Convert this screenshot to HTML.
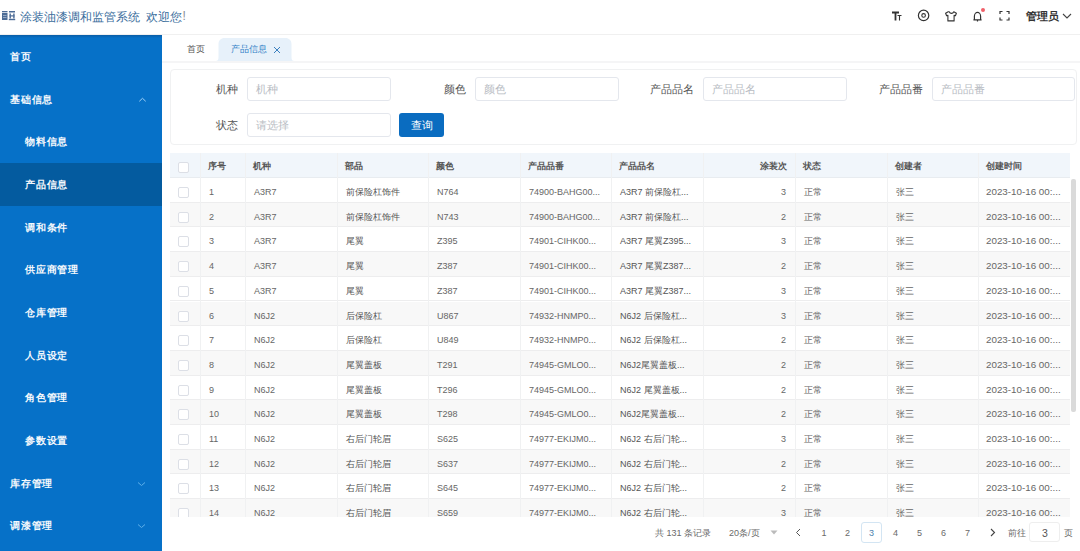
<!DOCTYPE html>
<html><head><meta charset="utf-8">
<style>
*{box-sizing:border-box;margin:0;padding:0}
html,body{width:1080px;height:551px;overflow:hidden;background:#fff;font-family:"Liberation Sans",sans-serif;}
.abs{position:absolute}
#hdr{position:absolute;left:0;top:0;width:1080px;height:35px;background:#fff;border-bottom:1px solid #f0f0f0}
.title{position:absolute;left:20px;top:9px;font-size:12px;color:#3a6d9c;white-space:nowrap;font-weight:500}
#side{position:absolute;left:0;top:35px;width:162px;height:516px;background:#0671c8;}
.mi{position:absolute;left:0;width:162px;height:43px;color:#f4f8fc;font-size:10px;line-height:44px;font-weight:700;letter-spacing:0.8px}
.mi.top{padding-left:10px}
.mi.sub{padding-left:25px}
.mi.act{background:#045b9f}
.chev{position:absolute;right:14px;top:0}
.card{position:absolute;left:170px;top:69px;width:907px;height:76px;border:1px solid #f0f1f2;border-radius:4px;background:#fff}
.lbl{position:absolute;font-size:11px;color:#555;font-weight:300;text-align:right;line-height:24px;white-space:nowrap}
.inp{position:absolute;height:24px;border:1px solid #e4e7ed;border-radius:3px;font-size:11px;color:#b8bcc3;line-height:22px;padding-left:8px;background:#fff}
.btn{position:absolute;left:399px;top:113px;width:45px;height:24px;background:#0a6cc0;border-radius:3px;color:#fff;font-size:11px;line-height:24px;text-align:center}
.thd{position:absolute;left:170px;width:900px;background:#f1f6fb;border-bottom:1px solid #e8ecf0}
.tr{position:absolute;left:170px;width:900px;height:24.7px;background:#fff;border-bottom:1px solid #ededee}
.tr.even{background:#f8f8f8}
.vl{position:absolute;top:153px;height:364px;width:1px;background:#f0f1f2}
.th{position:absolute;height:25px;line-height:26px;padding-left:8px;font-size:9px;font-weight:700;color:#555;white-space:nowrap}
.td{position:absolute;height:24.7px;line-height:29.5px;padding-left:9px;font-size:9px;color:#666;white-space:nowrap}
.bd{font-weight:500;color:#555}
.tm{font-size:9.8px;line-height:28.5px;padding-left:8px}
.r{text-align:right;padding-left:0;padding-right:8px}
.td.r{padding-right:9px}
.cb{position:absolute;width:11px;height:11px;border:1px solid #dcdfe6;border-radius:2px;background:#fff}
#tabs .t{position:absolute;font-size:9px;line-height:23px;white-space:nowrap}
.pg{position:absolute;top:523px;height:20px;line-height:20px;font-size:9px;color:#6a6a6a;white-space:nowrap}
</style></head><body>
<div id="hdr">
  
  <svg class="abs" style="left:1px;top:10px" width="15" height="11" viewBox="0 0 15 11"><g fill="#4c6c96"><rect x="1" y="1" width="5.5" height="1.3"/><rect x="1" y="3" width="5.5" height="7"/><rect x="8" y="1" width="6" height="1.5"/><rect x="8.5" y="3.5" width="1.4" height="5"/><rect x="12.2" y="3.5" width="1.4" height="5"/><rect x="8.5" y="5.3" width="5" height="1.2"/><rect x="7.8" y="8.8" width="6.4" height="1.4"/></g><rect x="2" y="5" width="3.5" height="0.8" fill="#a9bad0"/><rect x="2" y="7.2" width="3.5" height="0.8" fill="#a9bad0"/></svg>
  <div class="title" style="left:20px">涂装油漆调和监管系统</div><div class="title" style="left:145.5px">欢迎您</div><div class="abs" style="left:182.5px;top:9px;font-size:12px;color:#8a8f95">!</div>
  <div class="abs" style="left:1026px;top:10px;font-size:10.5px;color:#333;font-weight:700">管理员</div>
  <svg class="abs" style="left:885px;top:5px" width="130" height="22" viewBox="0 0 130 22" fill="none" stroke="#333" stroke-width="1.3">
    <!-- TT -->
    <path d="M7 7.5h7M10.5 7.5v8" stroke-width="1.8"/>
    <path d="M12.5 10.5h4M14.5 10.5v5" stroke-width="1.1"/>
    <!-- circle -->
    <circle cx="38.6" cy="10.4" r="5.2" stroke-width="1.2"/>
    <circle cx="38.6" cy="10.4" r="1.8" stroke-width="1.1"/>
    <!-- shirt -->
    <path d="M63.2 6.8l-2.6 1.4 1 2.6 1.3-.5v5.6h6.2v-5.6l1.3.5 1-2.6-2.6-1.4c-.5 1.1-1.3 1.6-2.3 1.6s-1.8-.5-2.3-1.6z" stroke-width="1.1" stroke-linejoin="round"/>
    <!-- bell -->
    <path d="M89.4 14.8v-3.6c0-2.1 1.4-3.8 3.1-3.8s3.1 1.7 3.1 3.8v3.6M88.4 14.8h8.2M92.5 15.2v1.3" stroke-width="1.2"/>
    <!-- fullscreen -->
    <path d="M115 9v-2.5h2.5M121.5 6.5h2.5v2.5M124 12.5v2.5h-2.5M117.5 15h-2.5v-2.5" stroke-width="1.2"/>
  </svg>
  <div class="abs" style="left:980.5px;top:7.5px;width:4.5px;height:4.5px;border-radius:50%;background:#f0606a"></div>
  <svg class="abs" style="left:1062px;top:13px" width="10" height="6" viewBox="0 0 10 6"><path d="M1 1l4 4 4-4" fill="none" stroke="#444" stroke-width="1.1"/></svg>

</div>
<div id="side">
  <div class="abs" style="left:0;top:0;width:162px;height:3px;background:linear-gradient(#0a5da6,rgba(6,113,200,0))"></div>
  <div class="mi top" style="top:0">首页</div>
  <div class="mi top" style="top:43px">基础信息<svg class="abs" style="left:138px;top:19px" width="9" height="6" viewBox="0 0 9 6"><path d="M1.3 4.3l3.2-3 3.2 3" fill="none" stroke="#9fd0f7" stroke-width="1"/></svg></div>
  <div class="mi sub" style="top:85px">物料信息</div>
  <div class="mi sub act" style="top:128px">产品信息</div>
  <div class="mi sub" style="top:171px">调和条件</div>
  <div class="mi sub" style="top:213px">供应商管理</div>
  <div class="mi sub" style="top:256px">仓库管理</div>
  <div class="mi sub" style="top:299px">人员设定</div>
  <div class="mi sub" style="top:341px">角色管理</div>
  <div class="mi sub" style="top:384px">参数设置</div>
  <div class="mi top" style="top:427px">库存管理<svg class="abs" style="left:137px;top:19px" width="9" height="6" viewBox="0 0 9 6"><path d="M1 1.5l3.5 3 3.5-3" fill="none" stroke="#5fb0ea" stroke-width="1"/></svg></div>
  <div class="mi top" style="top:469px">调漆管理<svg class="abs" style="left:137px;top:19px" width="9" height="6" viewBox="0 0 9 6"><path d="M1 1.5l3.5 3 3.5-3" fill="none" stroke="#5fb0ea" stroke-width="1"/></svg></div>
</div>
<div id="tabs">
  <div class="t" style="left:186.5px;top:38px;color:#555">首页</div>
  <div class="abs" style="left:162px;top:61px;width:918px;height:2px;background:#f5f5f6"></div>
  <svg class="abs" style="left:214px;top:37px" width="82" height="25" viewBox="0 0 82 25"><path d="M1.5 24c2.5 0 3-1.5 3-4V7c0-3.5 2.5-6 6-6h61c3.5 0 6 2.5 6 6v13c0 2.5.5 4 3 4z" fill="#e7f1fa"/></svg>
  <div class="t" style="left:230.5px;top:38px;color:#2f7fc6">产品信息</div>
  <svg class="abs" style="left:272.5px;top:46px" width="8" height="8" viewBox="0 0 8 8"><path d="M1 1l6 6M7 1l-6 6" stroke="#3a80c0" stroke-width="1"/></svg>
</div>
<div class="card"></div>
<div class="lbl" style="left:200px;top:77px;width:38px">机种</div>
<div class="inp" style="left:247px;top:77px;width:144px">机种</div>
<div class="lbl" style="left:420px;top:77px;width:46px">颜色</div>
<div class="inp" style="left:475px;top:77px;width:144px">颜色</div>
<div class="lbl" style="left:640px;top:77px;width:54px">产品品名</div>
<div class="inp" style="left:703px;top:77px;width:144px">产品品名</div>
<div class="lbl" style="left:860px;top:77px;width:63px">产品品番</div>
<div class="inp" style="left:932px;top:77px;width:143px">产品品番</div>
<div class="lbl" style="left:200px;top:113px;width:38px">状态</div>
<div class="inp" style="left:247px;top:113px;width:144px">请选择</div>
<div class="btn">查询</div>
<div id="tbl" style="position:absolute;left:0;top:0;width:1080px;height:517px;overflow:hidden">
<div class="thd" style="top:153px;height:25px"></div>
<div class="tr" style="top:178.0px"></div>
<div class="tr even" style="top:202.7px"></div>
<div class="tr" style="top:227.4px"></div>
<div class="tr even" style="top:252.1px"></div>
<div class="tr" style="top:276.8px"></div>
<div class="tr even" style="top:301.5px"></div>
<div class="tr" style="top:326.2px"></div>
<div class="tr even" style="top:350.9px"></div>
<div class="tr" style="top:375.6px"></div>
<div class="tr even" style="top:400.3px"></div>
<div class="tr" style="top:425.0px"></div>
<div class="tr even" style="top:449.7px"></div>
<div class="tr" style="top:474.4px"></div>
<div class="tr even" style="top:499.1px"></div>
<div class="vl" style="left:200px"></div>
<div class="vl" style="left:245px"></div>
<div class="vl" style="left:337px"></div>
<div class="vl" style="left:428px"></div>
<div class="vl" style="left:520px"></div>
<div class="vl" style="left:611px"></div>
<div class="vl" style="left:703px"></div>
<div class="vl" style="left:795px"></div>
<div class="vl" style="left:887px"></div>
<div class="vl" style="left:978px"></div>
<div class="cb" style="left:178px;top:162px"></div>
<div class="th" style="left:200px;width:45px;top:153px">序号</div>
<div class="th" style="left:245px;width:92px;top:153px">机种</div>
<div class="th" style="left:337px;width:91px;top:153px">部品</div>
<div class="th" style="left:428px;width:92px;top:153px">颜色</div>
<div class="th" style="left:520px;width:91px;top:153px">产品品番</div>
<div class="th" style="left:611px;width:92px;top:153px">产品品名</div>
<div class="th r" style="left:703px;width:92px;top:153px">涂装次</div>
<div class="th" style="left:795px;width:92px;top:153px">状态</div>
<div class="th" style="left:887px;width:91px;top:153px">创建者</div>
<div class="th" style="left:978px;width:92px;top:153px">创建时间</div>
<div class="cb" style="left:178px;top:187.0px"></div>
<div class="td" style="left:200px;width:45px;top:178.0px">1</div>
<div class="td" style="left:245px;width:92px;top:178.0px">A3R7</div>
<div class="td bd" style="left:337px;width:91px;top:178.0px">前保险杠饰件</div>
<div class="td" style="left:428px;width:92px;top:178.0px">N764</div>
<div class="td" style="left:520px;width:91px;top:178.0px">74900-BAHG00...</div>
<div class="td bd" style="left:611px;width:92px;top:178.0px">A3R7 前保险杠...</div>
<div class="td r" style="left:703px;width:92px;top:178.0px">3</div>
<div class="td" style="left:795px;width:92px;top:178.0px">正常</div>
<div class="td" style="left:887px;width:91px;top:178.0px">张三</div>
<div class="td tm" style="left:978px;width:92px;top:178.0px">2023-10-16 00:...</div>
<div class="cb" style="left:178px;top:211.7px"></div>
<div class="td" style="left:200px;width:45px;top:202.7px">2</div>
<div class="td" style="left:245px;width:92px;top:202.7px">A3R7</div>
<div class="td bd" style="left:337px;width:91px;top:202.7px">前保险杠饰件</div>
<div class="td" style="left:428px;width:92px;top:202.7px">N743</div>
<div class="td" style="left:520px;width:91px;top:202.7px">74900-BAHG00...</div>
<div class="td bd" style="left:611px;width:92px;top:202.7px">A3R7 前保险杠...</div>
<div class="td r" style="left:703px;width:92px;top:202.7px">2</div>
<div class="td" style="left:795px;width:92px;top:202.7px">正常</div>
<div class="td" style="left:887px;width:91px;top:202.7px">张三</div>
<div class="td tm" style="left:978px;width:92px;top:202.7px">2023-10-16 00:...</div>
<div class="cb" style="left:178px;top:236.4px"></div>
<div class="td" style="left:200px;width:45px;top:227.4px">3</div>
<div class="td" style="left:245px;width:92px;top:227.4px">A3R7</div>
<div class="td bd" style="left:337px;width:91px;top:227.4px">尾翼</div>
<div class="td" style="left:428px;width:92px;top:227.4px">Z395</div>
<div class="td" style="left:520px;width:91px;top:227.4px">74901-CIHK00...</div>
<div class="td bd" style="left:611px;width:92px;top:227.4px">A3R7 尾翼Z395...</div>
<div class="td r" style="left:703px;width:92px;top:227.4px">3</div>
<div class="td" style="left:795px;width:92px;top:227.4px">正常</div>
<div class="td" style="left:887px;width:91px;top:227.4px">张三</div>
<div class="td tm" style="left:978px;width:92px;top:227.4px">2023-10-16 00:...</div>
<div class="cb" style="left:178px;top:261.1px"></div>
<div class="td" style="left:200px;width:45px;top:252.1px">4</div>
<div class="td" style="left:245px;width:92px;top:252.1px">A3R7</div>
<div class="td bd" style="left:337px;width:91px;top:252.1px">尾翼</div>
<div class="td" style="left:428px;width:92px;top:252.1px">Z387</div>
<div class="td" style="left:520px;width:91px;top:252.1px">74901-CIHK00...</div>
<div class="td bd" style="left:611px;width:92px;top:252.1px">A3R7 尾翼Z387...</div>
<div class="td r" style="left:703px;width:92px;top:252.1px">2</div>
<div class="td" style="left:795px;width:92px;top:252.1px">正常</div>
<div class="td" style="left:887px;width:91px;top:252.1px">张三</div>
<div class="td tm" style="left:978px;width:92px;top:252.1px">2023-10-16 00:...</div>
<div class="cb" style="left:178px;top:285.8px"></div>
<div class="td" style="left:200px;width:45px;top:276.8px">5</div>
<div class="td" style="left:245px;width:92px;top:276.8px">A3R7</div>
<div class="td bd" style="left:337px;width:91px;top:276.8px">尾翼</div>
<div class="td" style="left:428px;width:92px;top:276.8px">Z387</div>
<div class="td" style="left:520px;width:91px;top:276.8px">74901-CIHK00...</div>
<div class="td bd" style="left:611px;width:92px;top:276.8px">A3R7 尾翼Z387...</div>
<div class="td r" style="left:703px;width:92px;top:276.8px">3</div>
<div class="td" style="left:795px;width:92px;top:276.8px">正常</div>
<div class="td" style="left:887px;width:91px;top:276.8px">张三</div>
<div class="td tm" style="left:978px;width:92px;top:276.8px">2023-10-16 00:...</div>
<div class="cb" style="left:178px;top:310.5px"></div>
<div class="td" style="left:200px;width:45px;top:301.5px">6</div>
<div class="td" style="left:245px;width:92px;top:301.5px">N6J2</div>
<div class="td bd" style="left:337px;width:91px;top:301.5px">后保险杠</div>
<div class="td" style="left:428px;width:92px;top:301.5px">U867</div>
<div class="td" style="left:520px;width:91px;top:301.5px">74932-HNMP0...</div>
<div class="td bd" style="left:611px;width:92px;top:301.5px">N6J2 后保险杠...</div>
<div class="td r" style="left:703px;width:92px;top:301.5px">3</div>
<div class="td" style="left:795px;width:92px;top:301.5px">正常</div>
<div class="td" style="left:887px;width:91px;top:301.5px">张三</div>
<div class="td tm" style="left:978px;width:92px;top:301.5px">2023-10-16 00:...</div>
<div class="cb" style="left:178px;top:335.2px"></div>
<div class="td" style="left:200px;width:45px;top:326.2px">7</div>
<div class="td" style="left:245px;width:92px;top:326.2px">N6J2</div>
<div class="td bd" style="left:337px;width:91px;top:326.2px">后保险杠</div>
<div class="td" style="left:428px;width:92px;top:326.2px">U849</div>
<div class="td" style="left:520px;width:91px;top:326.2px">74932-HNMP0...</div>
<div class="td bd" style="left:611px;width:92px;top:326.2px">N6J2 后保险杠...</div>
<div class="td r" style="left:703px;width:92px;top:326.2px">2</div>
<div class="td" style="left:795px;width:92px;top:326.2px">正常</div>
<div class="td" style="left:887px;width:91px;top:326.2px">张三</div>
<div class="td tm" style="left:978px;width:92px;top:326.2px">2023-10-16 00:...</div>
<div class="cb" style="left:178px;top:359.9px"></div>
<div class="td" style="left:200px;width:45px;top:350.9px">8</div>
<div class="td" style="left:245px;width:92px;top:350.9px">N6J2</div>
<div class="td bd" style="left:337px;width:91px;top:350.9px">尾翼盖板</div>
<div class="td" style="left:428px;width:92px;top:350.9px">T291</div>
<div class="td" style="left:520px;width:91px;top:350.9px">74945-GMLO0...</div>
<div class="td bd" style="left:611px;width:92px;top:350.9px">N6J2尾翼盖板...</div>
<div class="td r" style="left:703px;width:92px;top:350.9px">2</div>
<div class="td" style="left:795px;width:92px;top:350.9px">正常</div>
<div class="td" style="left:887px;width:91px;top:350.9px">张三</div>
<div class="td tm" style="left:978px;width:92px;top:350.9px">2023-10-16 00:...</div>
<div class="cb" style="left:178px;top:384.6px"></div>
<div class="td" style="left:200px;width:45px;top:375.6px">9</div>
<div class="td" style="left:245px;width:92px;top:375.6px">N6J2</div>
<div class="td bd" style="left:337px;width:91px;top:375.6px">尾翼盖板</div>
<div class="td" style="left:428px;width:92px;top:375.6px">T296</div>
<div class="td" style="left:520px;width:91px;top:375.6px">74945-GMLO0...</div>
<div class="td bd" style="left:611px;width:92px;top:375.6px">N6J2 尾翼盖板...</div>
<div class="td r" style="left:703px;width:92px;top:375.6px">2</div>
<div class="td" style="left:795px;width:92px;top:375.6px">正常</div>
<div class="td" style="left:887px;width:91px;top:375.6px">张三</div>
<div class="td tm" style="left:978px;width:92px;top:375.6px">2023-10-16 00:...</div>
<div class="cb" style="left:178px;top:409.3px"></div>
<div class="td" style="left:200px;width:45px;top:400.3px">10</div>
<div class="td" style="left:245px;width:92px;top:400.3px">N6J2</div>
<div class="td bd" style="left:337px;width:91px;top:400.3px">尾翼盖板</div>
<div class="td" style="left:428px;width:92px;top:400.3px">T298</div>
<div class="td" style="left:520px;width:91px;top:400.3px">74945-GMLO0...</div>
<div class="td bd" style="left:611px;width:92px;top:400.3px">N6J2尾翼盖板...</div>
<div class="td r" style="left:703px;width:92px;top:400.3px">2</div>
<div class="td" style="left:795px;width:92px;top:400.3px">正常</div>
<div class="td" style="left:887px;width:91px;top:400.3px">张三</div>
<div class="td tm" style="left:978px;width:92px;top:400.3px">2023-10-16 00:...</div>
<div class="cb" style="left:178px;top:434.0px"></div>
<div class="td" style="left:200px;width:45px;top:425.0px">11</div>
<div class="td" style="left:245px;width:92px;top:425.0px">N6J2</div>
<div class="td bd" style="left:337px;width:91px;top:425.0px">右后门轮眉</div>
<div class="td" style="left:428px;width:92px;top:425.0px">S625</div>
<div class="td" style="left:520px;width:91px;top:425.0px">74977-EKIJM0...</div>
<div class="td bd" style="left:611px;width:92px;top:425.0px">N6J2 右后门轮...</div>
<div class="td r" style="left:703px;width:92px;top:425.0px">3</div>
<div class="td" style="left:795px;width:92px;top:425.0px">正常</div>
<div class="td" style="left:887px;width:91px;top:425.0px">张三</div>
<div class="td tm" style="left:978px;width:92px;top:425.0px">2023-10-16 00:...</div>
<div class="cb" style="left:178px;top:458.7px"></div>
<div class="td" style="left:200px;width:45px;top:449.7px">12</div>
<div class="td" style="left:245px;width:92px;top:449.7px">N6J2</div>
<div class="td bd" style="left:337px;width:91px;top:449.7px">右后门轮眉</div>
<div class="td" style="left:428px;width:92px;top:449.7px">S637</div>
<div class="td" style="left:520px;width:91px;top:449.7px">74977-EKIJM0...</div>
<div class="td bd" style="left:611px;width:92px;top:449.7px">N6J2 右后门轮...</div>
<div class="td r" style="left:703px;width:92px;top:449.7px">2</div>
<div class="td" style="left:795px;width:92px;top:449.7px">正常</div>
<div class="td" style="left:887px;width:91px;top:449.7px">张三</div>
<div class="td tm" style="left:978px;width:92px;top:449.7px">2023-10-16 00:...</div>
<div class="cb" style="left:178px;top:483.4px"></div>
<div class="td" style="left:200px;width:45px;top:474.4px">13</div>
<div class="td" style="left:245px;width:92px;top:474.4px">N6J2</div>
<div class="td bd" style="left:337px;width:91px;top:474.4px">右后门轮眉</div>
<div class="td" style="left:428px;width:92px;top:474.4px">S645</div>
<div class="td" style="left:520px;width:91px;top:474.4px">74977-EKIJM0...</div>
<div class="td bd" style="left:611px;width:92px;top:474.4px">N6J2 右后门轮...</div>
<div class="td r" style="left:703px;width:92px;top:474.4px">2</div>
<div class="td" style="left:795px;width:92px;top:474.4px">正常</div>
<div class="td" style="left:887px;width:91px;top:474.4px">张三</div>
<div class="td tm" style="left:978px;width:92px;top:474.4px">2023-10-16 00:...</div>
<div class="cb" style="left:178px;top:508.1px"></div>
<div class="td" style="left:200px;width:45px;top:499.1px">14</div>
<div class="td" style="left:245px;width:92px;top:499.1px">N6J2</div>
<div class="td bd" style="left:337px;width:91px;top:499.1px">右后门轮眉</div>
<div class="td" style="left:428px;width:92px;top:499.1px">S659</div>
<div class="td" style="left:520px;width:91px;top:499.1px">74977-EKIJM0...</div>
<div class="td bd" style="left:611px;width:92px;top:499.1px">N6J2 右后门轮...</div>
<div class="td r" style="left:703px;width:92px;top:499.1px">3</div>
<div class="td" style="left:795px;width:92px;top:499.1px">正常</div>
<div class="td" style="left:887px;width:91px;top:499.1px">张三</div>
<div class="td tm" style="left:978px;width:92px;top:499.1px">2023-10-16 00:...</div>
</div>
<div class="pg" style="left:655px">共 131 条记录</div>
<div class="pg" style="left:729px">20条/页</div>
<svg class="abs" style="left:770px;top:530px" width="8" height="5" viewBox="0 0 8 5"><path d="M0.5 0.5h7l-3.5 4z" fill="#bbb"/></svg>
<svg class="abs" style="left:795px;top:528px" width="6" height="9" viewBox="0 0 6 9"><path d="M5 1l-3.5 3.5 3.5 3.5" fill="none" stroke="#555" stroke-width="1"/></svg>
<svg class="abs" style="left:990px;top:528px" width="6" height="9" viewBox="0 0 6 9"><path d="M1 1l3.5 3.5-3.5 3.5" fill="none" stroke="#444" stroke-width="1.1"/></svg>
<div class="abs" style="left:1071px;top:179px;width:5px;height:233px;background:#dadada;border-radius:2px"></div>
<div class="pg" style="left:821.5px">1</div>
<div class="pg" style="left:845px">2</div>
<div class="abs" style="left:861px;top:522px;width:21px;height:21px;border:1px solid #d3e5f3;border-radius:3px"></div>
<div class="pg" style="left:869px;color:#4d7fae">3</div>
<div class="pg" style="left:893px">4</div>
<div class="pg" style="left:917px">5</div>
<div class="pg" style="left:941px">6</div>
<div class="pg" style="left:965px">7</div>
<div class="pg" style="left:1008px">前往</div>
<div class="abs" style="left:1029px;top:521.5px;width:31px;height:20.5px;border:1px solid #eeeeee;border-radius:3px"></div>
<div class="pg" style="left:1042px;font-size:10.5px;color:#555">3</div>
<div class="pg" style="left:1064px">页</div>
</body></html>
